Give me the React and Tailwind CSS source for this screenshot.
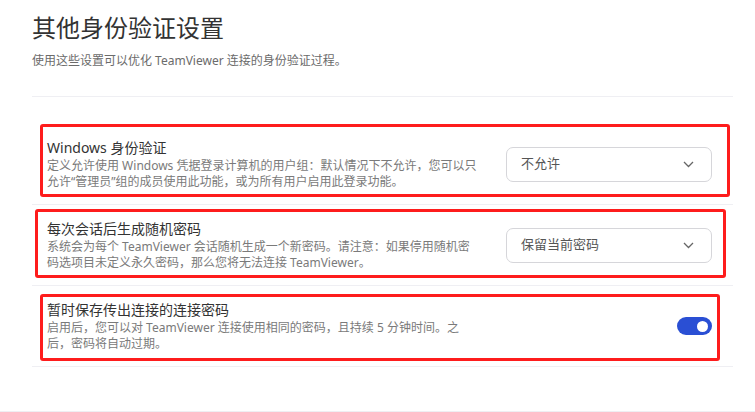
import { useState } from 'react'

const rows = [
  {
    title: 'Windows 身份验证',
    lines: [
      '定义允许使用 Windows 凭据登录计算机的用户组：默认情况下不允许，您可以只',
      '允许“管理员”组的成员使用此功能，或为所有用户启用此登录功能。',
    ],
    control: 'select',
    value: '不允许',
  },
  {
    title: '每次会话后生成随机密码',
    lines: [
      '系统会为每个 TeamViewer 会话随机生成一个新密码。请注意：如果停用随机密',
      '码选项目未定义永久密码，那么您将无法连接 TeamViewer。',
    ],
    control: 'select',
    value: '保留当前密码',
  },
  {
    title: '暂时保存传出连接的连接密码',
    lines: [
      '启用后，您可以对 TeamViewer 连接使用相同的密码，且持续 5 分钟时间。之',
      '后，密码将自动过期。',
    ],
    control: 'toggle',
  },
]

function Select({ value }) {
  return (
    <div className="w-[206px] h-[35px] flex items-center justify-between pl-[14px] pr-[17px] border border-[#d6d6da] rounded-[7px] bg-white">
      <span className="text-[13px] text-[#555]">{value}</span>
      <svg width="11" height="7" viewBox="0 0 11 7" fill="none">
        <path d="M1 1l4.5 4.5L10 1" stroke="#666" strokeWidth="1.3" />
      </svg>
    </div>
  )
}

function Toggle() {
  const [on, setOn] = useState(true)
  return (
    <button
      onClick={() => setOn(v => !v)}
      className={`w-[35px] h-[18px] rounded-full flex items-center px-[4px] ${on ? 'bg-[#2a4fd4] justify-end' : 'bg-[#c8c8cc] justify-start'}`}
    >
      <span className="w-[11px] h-[11px] rounded-full bg-white" />
    </button>
  )
}

export default function App() {
  return (
    <div className="relative w-[755px] h-[412px] overflow-hidden bg-white flex flex-col font-['Noto_Sans','Noto_Sans_CJK_SC',sans-serif]">
      <div className="ml-[32px] w-[701px]">
        {/* Header */}
        <div className="pt-[12px] pb-[26px] border-b border-[#efeff3]">
          <h1 className="text-[24px] leading-[32px] text-[#333] font-normal">其他身份验证设置</h1>
          <p className="mt-[8px] text-[12px] leading-[18px] text-[#6b6b6b]">
            使用这些设置可以优化 TeamViewer 连接的身份验证过程。
          </p>
        </div>

        {/* Settings */}
        <div className="mt-[27px]">
          {rows.map(r => (
            <div
              key={r.title}
              className="flex items-center justify-between border-b border-[#efeff3] pl-[15px] pr-[21px] py-[14px]"
            >
              <div>
                <div className="text-[14px] leading-[20px] text-[#333]">{r.title}</div>
                <div className="text-[12px] leading-[16px] text-[#7a7a7a] whitespace-nowrap">
                  {r.lines[0]}
                  <br />
                  {r.lines[1]}
                </div>
              </div>
              {r.control === 'select' ? <Select value={r.value} /> : <Toggle />}
            </div>
          ))}
        </div>
      </div>

      <div className="mt-auto h-px bg-[#efeff3]" />

      {/* annotation boxes */}
      <div className="absolute left-[40px] top-[124px] w-[690px] h-[73px] border-[3px] border-[#fe1c1c] rounded-[3px]" />
      <div className="absolute left-[35px] top-[209px] w-[691px] h-[69px] border-[3px] border-[#fe1c1c] rounded-[3px]" />
      <div className="absolute left-[40px] top-[294px] w-[680px] h-[67px] border-[3px] border-[#fe1c1c] rounded-[3px]" />
    </div>
  )
}
